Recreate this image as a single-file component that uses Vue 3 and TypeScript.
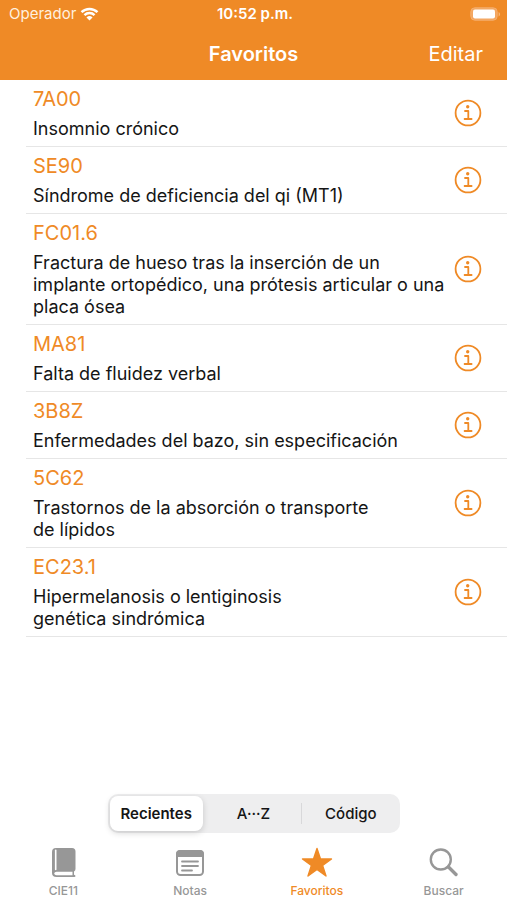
<script setup lang="ts">
import { ref } from 'vue'

interface Favorite {
  code: string
  title: string
}

const favorites: Favorite[] = [
  { code: '7A00', title: 'Insomnio crónico' },
  { code: 'SE90', title: 'Síndrome de deficiencia del qi (MT1)' },
  { code: 'FC01.6', title: 'Fractura de hueso tras la inserción de un\nimplante ortopédico, una prótesis articular o una\nplaca ósea' },
  { code: 'MA81', title: 'Falta de fluidez verbal' },
  { code: '3B8Z', title: 'Enfermedades del bazo, sin especificación' },
  { code: '5C62', title: 'Trastornos de la absorción o transporte\nde lípidos' },
  { code: 'EC23.1', title: 'Hipermelanosis o lentiginosis\ngenética sindrómica' },
]

const orders = ['Recientes', 'A···Z', 'Código']
const order = ref('Recientes')

const tabs = ['CIE11', 'Notas', 'Favoritos', 'Buscar']
const activeTab = ref('Favoritos')
</script>

<template>
  <div class="screen">
    <header class="header">
      <div class="status">
        <div class="carrier">
          <span>Operador</span>
          <svg class="wifi" viewBox="0 0 20 14" aria-hidden="true">
            <path d="M1.6 5.1a12 12 0 0 1 16.8 0M4.7 8.2a7.6 7.6 0 0 1 10.6 0" fill="none" stroke="currentColor" stroke-width="2.6" />
            <path d="M10 13.8 6.8 10.6a4.6 4.6 0 0 1 6.4 0z" fill="currentColor" />
          </svg>
        </div>
        <time class="clock">10:52 p.m.</time>
        <svg class="battery" viewBox="0 0 31 14" aria-hidden="true">
          <rect x="0.8" y="0.8" width="26.4" height="12.4" rx="4" fill="#f3a660" stroke="#f4ae6e" />
          <rect x="3" y="2.6" width="22" height="9" rx="2" fill="#fff" />
          <path d="M28.6 5v4.4c2-.8 2-3.6 0-4.4z" fill="#f6b77c" />
        </svg>
      </div>
      <div class="nav">
        <h1>Favoritos</h1>
        <button type="button" class="edit">Editar</button>
      </div>
    </header>

    <main class="content">
      <ul class="list">
        <li v-for="item in favorites" :key="item.code" class="row">
          <div class="entry">
            <span class="code">{{ item.code }}</span>
            <p class="title">{{ item.title }}</p>
          </div>
          <button type="button" class="info" :aria-label="'Información de ' + item.code">
            <svg viewBox="0 0 28 28" aria-hidden="true">
              <circle cx="14" cy="14" r="12.4" fill="none" stroke="currentColor" stroke-width="1.8" />
              <circle cx="13.7" cy="7.7" r="1.7" fill="currentColor" />
              <path d="M11 12h3.300v7.800M10.600 20h7" fill="none" stroke="currentColor" stroke-width="1.8" stroke-linecap="round" stroke-linejoin="round" />
            </svg>
          </button>
        </li>
      </ul>
    </main>

    <div class="segments" role="group" aria-label="Orden">
      <button
        v-for="name in orders"
        :key="name"
        type="button"
        class="segment"
        :class="{ selected: order === name }"
        :aria-pressed="order === name"
        @click="order = name"
      >{{ name }}</button>
    </div>

    <nav class="tabs">
      <button
        v-for="tab in tabs"
        :key="tab"
        type="button"
        class="tab"
        :class="{ active: activeTab === tab }"
        @click="activeTab = tab"
      >
        <svg v-if="tab === 'CIE11'" viewBox="0 0 32 32" aria-hidden="true">
          <path d="M9 1h16q3.500 0 3.500 3.500V22q0 2-1.500 2.400v3.400q1.500.2 1.500 1.200t-1.200 1H9.500Q5 30 5 26V5q0-4 4-4z" fill="currentColor" />
          <path d="M8.700 3.400v19" fill="none" stroke="#fff" stroke-width="1.600" stroke-linecap="round" />
          <path d="M25.500 24.800v3.400H9.500q-2.200 0-2.200-1.700t2.200-1.700z" fill="#fff" />
        </svg>
        <svg v-else-if="tab === 'Notas'" viewBox="0 0 32 32" aria-hidden="true">
          <rect x="3" y="4" width="26" height="24" rx="3.500" fill="none" stroke="currentColor" stroke-width="2" />
          <path d="M2 10V7q0-4 4-4h20q4 0 4 4v3z" fill="currentColor" />
          <path d="M8 14.500h16M8 19h16M8 23.500h10" fill="none" stroke="currentColor" stroke-width="1.800" stroke-linecap="round" />
        </svg>
        <svg v-else-if="tab === 'Favoritos'" viewBox="0 0 32 32" aria-hidden="true">
          <path d="M16 1.500 19.500 12H30.500L21.600 18.500 25 29 16 22.500 7 29 10.400 18.500 1.500 12H12.500z" fill="currentColor" stroke="currentColor" stroke-width="1.400" stroke-linejoin="round" />
        </svg>
        <svg v-else viewBox="0 0 32 32" aria-hidden="true">
          <circle cx="12.800" cy="12.500" r="10" fill="none" stroke="currentColor" stroke-width="2.400" />
          <path d="m20.500 20 7.500 7.500" stroke="currentColor" stroke-width="3.400" stroke-linecap="round" />
        </svg>
        <span>{{ tab }}</span>
      </button>
    </nav>
  </div>
</template>

<style>
body {
  margin: 0;
  background: #fff;
}
</style>

<style scoped>
.screen {
  display: flex;
  flex-direction: column;
  min-height: 100vh;
  font-family: Inter, "Liberation Sans", sans-serif;
  color: #151515;
  background: #fff;
}

button {
  margin: 0;
  padding: 0;
  border: 0;
  background: none;
  font: inherit;
  color: inherit;
  cursor: pointer;
}

.header {
  background: #ef8a26;
  color: #fff;
}

.status,
.nav {
  display: grid;
  grid-template-columns: 1fr auto 1fr;
  align-items: center;
}

.status {
  height: 27px;
  padding: 0 6px 0 9px;
  font-size: 15px;
}

.carrier {
  display: flex;
  align-items: center;
  gap: 4px;
  color: #fff0df;
}

.wifi {
  width: 19px;
  height: 14px;
  color: #fff;
}

.clock {
  font-weight: 600;
}

.battery {
  width: 31px;
  height: 14px;
  justify-self: end;
}

.nav {
  height: 53px;
  padding: 0 24px;
}

h1 {
  grid-column: 2;
  margin: 0;
  font-size: 20px;
  font-weight: 600;
}

.edit {
  justify-self: end;
  font-size: 20px;
}

.content {
  flex: 1;
}

.list {
  margin: 0;
  padding: 0 0 0 26px;
  list-style: none;
}

.row {
  display: flex;
  align-items: center;
  justify-content: space-between;
  padding: 5px 25px 6px 7px;
  border-bottom: 1px solid #e6e6e6;
}

.entry {
  display: flex;
  flex-direction: column;
  gap: 5px;
}

.code {
  font-size: 20px;
  line-height: 28px;
  color: #ef8a26;
}

.title {
  margin: 0;
  font-size: 18px;
  line-height: 22px;
  white-space: pre-line;
}

.info {
  flex: none;
  width: 28px;
  height: 28px;
  color: #ef8a26;
}

.info svg {
  display: block;
}

.segments {
  display: grid;
  grid-template-columns: repeat(3, 1fr);
  gap: 4px;
  align-self: center;
  width: calc(100% - 40px);
  max-width: 292px;
  box-sizing: border-box;
  height: 39px;
  padding: 2px;
  border-radius: 10px;
  background: #eeeeef;
}

.segment {
  position: relative;
  font-size: 15px;
  font-weight: 500;
  border-radius: 8px;
}

.segment.selected {
  background: #fff;
  font-weight: 600;
  box-shadow: 0 2px 6px rgba(0, 0, 0, 0.16);
}

.segment:not(.selected) + .segment:not(.selected)::before {
  content: "";
  position: absolute;
  top: 7px;
  bottom: 7px;
  left: -3px;
  width: 1px;
  background: #d8d8da;
}

.tabs {
  display: grid;
  grid-template-columns: repeat(4, 1fr);
  margin-top: 14px;
  height: 53px;
}

.tab {
  display: flex;
  flex-direction: column;
  align-items: center;
  justify-content: flex-start;
  gap: 4px;
  font-size: 12px;
  line-height: 15px;
  font-weight: 500;
  color: #979797;
}

.tab svg {
  width: 32px;
  height: 32px;
}

.tab.active {
  color: #ef8a26;
}
</style>
